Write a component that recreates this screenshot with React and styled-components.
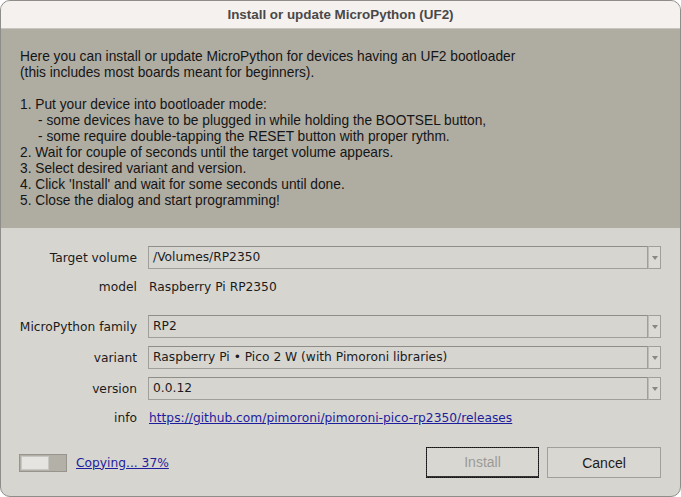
import React from 'react';
import styled, { createGlobalStyle } from 'styled-components';

const GlobalStyle = createGlobalStyle`
  html, body {
    margin: 0;
    padding: 0;
    background: #ffffff;
  }
  body {
    font-family: "Liberation Sans", Arial, sans-serif;
    font-size: 13px;
    color: #1b1b1b;
  }
`;

const Window = styled.div`
  width: 681px;
  height: 497px;
  box-sizing: border-box;
  display: flex;
  flex-direction: column;
  border-radius: 10px;
  border: 1px solid #8f8d89;
  overflow: hidden;
  background: #d7d5d0;
`;

const TitleBar = styled.div`
  height: 27px;
  flex-shrink: 0;
  display: flex;
  align-items: center;
  justify-content: center;
  background: #f4f1ee;
  border-bottom: 1px solid #c8c5c0;
  font-weight: bold;
  font-size: 13.4px;
  color: #4a4848;
`;

const InfoPanel = styled.div`
  background: #afaca2;
  padding: 20px 16px 19px 19px;
  line-height: 16px;
  font-size: 13.75px;
  color: #151515;
`;

const Line = styled.div`
  padding-left: ${p => (p.$sub ? '18px' : '0')};
  min-height: 16px;
`;

const Form = styled.div`
  flex: 1;
  display: flex;
  flex-direction: column;
  padding: 18px 19px 18px 16px;
  font-family: "DejaVu Sans", "Liberation Sans", sans-serif;
  font-size: 12.25px;
`;

const Grid = styled.div`
  display: grid;
  grid-template-columns: 120px 1fr;
  column-gap: 11px;
  row-gap: 8px;
  align-items: center;
`;

const Label = styled.div`
  text-align: right;
  margin-top: ${p => p.$top || 0}px;
`;

const Value = styled.div`
  height: 20px;
  line-height: 20px;
  padding-left: 1px;
  margin-top: ${p => p.$top || 0}px;
`;

const Combo = styled.div`
  display: flex;
  height: 23px;
  margin-top: ${p => p.$top || 0}px;
`;

const ComboField = styled.div`
  flex: 1;
  box-sizing: border-box;
  border: 1px solid #a19f99;
  border-top-color: #8f8d88;
  background: #d7d5d0;
  padding-left: 4px;
  line-height: 21px;
  white-space: nowrap;
  overflow: hidden;
`;

const ComboArrow = styled.div`
  width: 13px;
  box-sizing: border-box;
  border: 1px solid #a19f99;
  border-left: 1px solid #bdbbb6;
  background: #dcdad5;
  display: flex;
  align-items: center;
  justify-content: center;

  &::after {
    content: '';
    border-left: 3.5px solid transparent;
    border-right: 3.5px solid transparent;
    border-top: 4px solid #8a8884;
  }
`;

const Link = styled.a`
  color: #1d1d9e;
  text-decoration: underline;
`;

const Footer = styled.div`
  margin-top: auto;
  display: flex;
  align-items: center;
`;

const Progress = styled.div`
  width: 48px;
  height: 18px;
  box-sizing: border-box;
  margin-left: 2px;
  border: 1px solid #97948d;
  background: #b3b0a8;
  padding: 1px;
  display: flex;
`;

const ProgressChunk = styled.div`
  box-sizing: border-box;
  height: 100%;
  border: 1px solid #c9c7c2;
  background: #e6e4e0;
`;

const Status = styled(Link)`
  margin-left: 9px;
`;

const Buttons = styled.div`
  margin-left: auto;
  display: flex;
  gap: 8px;
`;

const Button = styled.div`
  width: ${p => p.$w}px;
  height: 31px;
  box-sizing: border-box;
  display: flex;
  align-items: center;
  justify-content: center;
  font-family: "Liberation Sans", Arial, sans-serif;
  font-size: 14px;
  border: 1px solid #a19f99;
  background: #d9d7d2;
  color: ${p => (p.$disabled ? '#9c9a96' : '#1b1b1b')};
  outline: ${p => (p.$focus ? '1px dotted #111' : 'none')};
  outline-offset: -1px;
  ${p => p.$focus && 'border: 1px solid #333; border-bottom-width: 2px;'}
`;

const infoLines = [
  { text: 'Here you can install or update MicroPython for devices having an UF2 bootloader' },
  { text: '(this includes most boards meant for beginners).' },
  { text: '' },
  { text: '1. Put your device into bootloader mode:' },
  { text: '- some devices have to be plugged in while holding the BOOTSEL button,', sub: true },
  { text: '- some require double-tapping the RESET button with proper rythm.', sub: true },
  { text: '2. Wait for couple of seconds until the target volume appears.' },
  { text: '3. Select desired variant and version.' },
  { text: "4. Click 'Install' and wait for some seconds until done." },
  { text: '5. Close the dialog and start programming!' },
];

const ComboBox = ({ value, top }) => (
  <Combo $top={top}>
    <ComboField>{value}</ComboField>
    <ComboArrow />
  </Combo>
);

const App = () => (
  <>
    <GlobalStyle />
    <Window>
      <TitleBar>Install or update MicroPython (UF2)</TitleBar>
      <InfoPanel>
        {infoLines.map((l, i) => (
          <Line key={i} $sub={l.sub}>{l.text}</Line>
        ))}
      </InfoPanel>
      <Form>
        <Grid>
          <Label>Target volume</Label>
          <ComboBox value="/Volumes/RP2350" />
          <Label>model</Label>
          <Value>Raspberry Pi RP2350</Value>
          <Label $top={10}>MicroPython family</Label>
          <ComboBox value="RP2" top={10} />
          <Label>variant</Label>
          <ComboBox value="Raspberry Pi • Pico 2 W (with Pimoroni libraries)" />
          <Label>version</Label>
          <ComboBox value="0.0.12" />
          <Label>info</Label>
          <Value>
            <Link href="#">https://github.com/pimoroni/pimoroni-pico-rp2350/releases</Link>
          </Value>
        </Grid>
        <Footer>
          <Progress>
            <ProgressChunk style={{ width: '28px' }} />
          </Progress>
          <Status href="#">Copying... 37%</Status>
          <Buttons>
            <Button $w={113} $disabled $focus>Install</Button>
            <Button $w={114}>Cancel</Button>
          </Buttons>
        </Footer>
      </Form>
    </Window>
  </>
);

export default App;
